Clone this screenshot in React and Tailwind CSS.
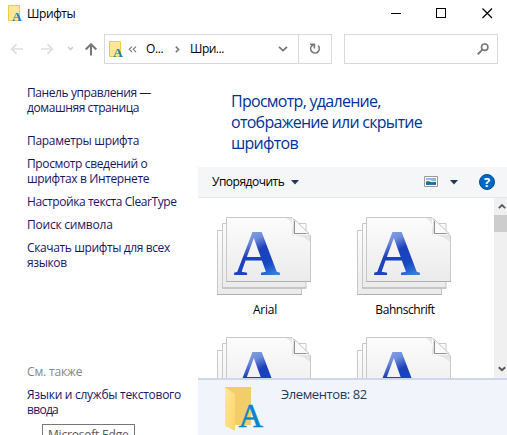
import React from "react";

const Chevron = ({ className, d, w = 1.8 }) => (
  <svg className={className} viewBox="0 0 10 6" fill="none" stroke="currentColor" strokeWidth={w}>
    <path d={d || "M1 .8 5 4.6 9 .8"} />
  </svg>
);

const FontFolder = () => (
  <svg className="h-[17px] w-[14px] shrink-0 overflow-visible" viewBox="0 0 14 17">
    <path d="M.5.5h11v15H.5z" fill="#ffe79a" stroke="#f5cb3c" />
    <text x="4" y="15.8" fontFamily="Liberation Serif" fontWeight="700" fontSize="13.5" fill="#1583b8">A</text>
  </svg>
);

const FontStack = () => (
  <svg className="h-[80px] w-[96px] shrink-0" viewBox="0 0 96 80">
    <defs>
      <linearGradient id="paper" x1="0" y1="0" x2="0" y2="1">
        <stop offset="0" stopColor="#fcfcfc" />
        <stop offset="1" stopColor="#ebebeb" />
      </linearGradient>
      <linearGradient id="ink" gradientUnits="userSpaceOnUse" x1="30" y1="14" x2="56" y2="64">
        <stop offset="0" stopColor="#8ba3e0" />
        <stop offset=".22" stopColor="#6f8edb" />
        <stop offset=".42" stopColor="#1c40bb" />
        <stop offset=".7" stopColor="#1746c2" />
        <stop offset="1" stopColor="#3f8fe0" />
      </linearGradient>
    </defs>
    <g stroke="#c8c8c8" fill="url(#paper)">
      <path d="M1.5 14.5H85.500V78.500H1.500z" />
      <path d="M6.500 7.500H90V72H6.500z" />
      <path d="M10.500 1.500H76L94.500 20V65.500H10.500z" />
    </g>
    <path d="M1 78.500H86M6 72H90.500M10 65.500H95" stroke="#a8a8a8" strokeWidth=".8" />
    <path d="M70 2H76V19H94V26Q88 20 77 19Q78 6 70 2z" fill="#d8d8d8" opacity=".6" />
    <path d="M78 3V17.500H93z" fill="#fafafa" stroke="#c4c4c4" />
    <path d="M78.500 5V17.500H90" stroke="#929292" fill="none" />
    <text x="17.500" y="58.700" fontFamily="Liberation Serif" fontWeight="700" fontSize="65" fill="url(#ink)">A</text>
  </svg>
);

const FontItem = ({ name, tracking }) => (
  <div className="flex h-[102px] w-[96px] flex-col items-center">
    <FontStack />
    <span className={`ml-0.5 mt-1.5 whitespace-nowrap text-[12px] leading-[16px] text-black ${tracking}`}>{name}</span>
  </div>
);

export default function App() {
  return (
    <div className="flex h-[435px] w-[507px] flex-col overflow-hidden bg-white font-['Open_Sans','Noto_Sans',sans-serif] text-[12px] text-black">
      <header className="flex h-[34px] shrink-0 items-start pl-2 pt-[5px]">
        <FontFolder />
        <span className="ml-[5px] leading-[17px] tracking-[-0.4px]">Шрифты</span>
        <svg className="ml-auto mr-3 h-[17px] w-[104px]" viewBox="0 0 104 17" fill="none" stroke="#000" shapeRendering="crispEdges">
          <path d="M0 8.500H10M45.500 3.500H54.500V12.500H45.500z" />
          <path d="M91.500 3.500 101 13M101 3.500 91.500 13" shapeRendering="auto" strokeWidth="1.2" />
        </svg>
      </header>

      <nav className="flex h-[30px] shrink-0 items-center">
        <svg className="ml-[10px] h-[14px] w-[88px]" viewBox="0 0 88 14" fill="none" strokeWidth="1.7">
          <g stroke="#dedede">
            <path d="M13 7H2M6.500 2.200 1.700 7l4.800 4.800M31 7H42M37.500 2.200 42.300 7l-4.800 4.800" />
            <path d="M58 5 60.500 7.500 63 5" stroke="#cfcfcf" />
          </g>
          <path d="M81 13.500V2.500M75.700 7.500 81 2.200l5.300 5.300" stroke="#777" strokeWidth="2" />
        </svg>
        <div className="ml-[6px] flex h-[30px] w-[228px] items-center border border-[#d9d9d9] pl-1">
          <FontFolder />
          <svg className="ml-[5px] h-[7px] w-[9px]" viewBox="0 0 9 7" fill="none" stroke="#777" strokeWidth="1.1">
            <path d="M4 .7 1.200 3.300 4 6M8 .7 5.200 3.300 8 6" />
          </svg>
          <span className="ml-[9px] w-[20px] whitespace-nowrap tracking-[-0.4px]">О...</span>
          <svg className="ml-[9px] h-[7px] w-[5px]" viewBox="0 0 5 7" fill="none" stroke="#777" strokeWidth="1.500">
            <path d="M.8.6 3.600 3.400.8 6.200" />
          </svg>
          <span className="ml-[10px] whitespace-nowrap tracking-[-0.5px]">Шри...</span>
          <Chevron className="ml-auto mr-[10px] h-[6px] w-[10px] text-[#777]" />
          <div className="flex h-full w-[33px] items-center justify-center border-l border-[#d9d9d9]">
            <svg className="h-[12px] w-[12px]" viewBox="0 0 12 12" fill="none" stroke="#777" strokeWidth="1.600">
              <path d="M9 2.600A4.300 4.300 0 1 1 2.800 2.800L5 1.200M1 1.300H5.400V5.600" />
            </svg>
          </div>
        </div>
        <div className="ml-3 flex h-[30px] w-[154px] items-center justify-end border border-[#d9d9d9] pr-2">
          <svg className="h-[12px] w-[12px]" viewBox="0 0 12 12" fill="none" stroke="#777" strokeWidth="1.600">
            <circle cx="7.700" cy="4.200" r="3.200" />
            <path d="M5.400 6.600.7 11.300" strokeWidth="1.900" />
          </svg>
        </div>
      </nav>

      <div className="flex min-h-0 flex-1">
        <aside className="flex w-[198px] shrink-0 flex-col whitespace-nowrap pl-[27px] pt-[21px] leading-[15px] text-[#1b1464]">
          <p className="tracking-[-0.41px]">Панель управления —<br />домашняя страница</p>
          <div className="mt-[18px] flex flex-col gap-2">
            <p className="tracking-[-0.3px]">Параметры шрифта</p>
            <p className="tracking-[-0.37px]">Просмотр сведений о<br />шрифтах в Интернете</p>
            <p className="tracking-[-0.42px]">Настройка текста ClearType</p>
            <p className="tracking-[-0.22px]">Поиск символа</p>
            <p className="tracking-[-0.38px]">Скачать шрифты для всех<br />языков</p>
          </div>
          <p className="mt-[94px] tracking-[-0.15px] text-[#858585]">См. также</p>
          <p className="mt-2 tracking-[-0.28px]">Языки и службы текстового<br /><span className="tracking-[-0.7px]">ввода</span></p>
          <div className="ml-[15px] mt-[7px] h-[22px] w-[93px] shrink-0 border border-[#767676] bg-white pl-[5px] pt-[2px] leading-[16px] tracking-[-0.2px] text-[#575757]">Microsoft Edge</div>
        </aside>

        <main className="flex min-w-0 flex-1 flex-col">
          <h1 className="h-[103px] shrink-0 whitespace-nowrap pl-[33px] pt-[27px] text-[16px] leading-[21px] tracking-[-0.72px] text-[#003399]">
            Просмотр, удаление,<br />отображение или скрытие<br />шрифтов
          </h1>
          <div className="flex h-[31px] shrink-0 items-center border-b border-[#e5e7e9] bg-[#f5f6f7] pl-[14px] pr-3">
            <span className="tracking-[-0.5px]">Упорядочить</span>
            <svg className="ml-[7px] h-[5px] w-[8px]" viewBox="0 0 8 5"><path d="M0 0H8L4 4.500z" fill="#1e395b" /></svg>
            <svg className="ml-auto h-[12px] w-[14px]" viewBox="0 0 14 12">
              <path d="M.5.5h13v10H.5z" fill="#fff" stroke="#999" />
              <path d="M2 2h10v7H2z" fill="#82b9e8" />
              <path d="M2 4q4-1 6 1l4 0v1H2z" fill="#e7f3f8" />
              <path d="M2 5.500q3-1 5 .8L12 6v3H2z" fill="#2e6873" />
              <path d="M2 7.700h10V9H2z" fill="#2674b5" />
            </svg>
            <svg className="ml-[12px] h-[5px] w-[8px]" viewBox="0 0 8 5"><path d="M0 0H8L4 4.500z" fill="#1e395b" /></svg>
            <span className="ml-[21px] flex h-4 w-4 items-center justify-center rounded-full border border-[#004b8d] bg-[#0067c5] text-[13px] font-bold leading-none text-white">?</span>
          </div>
          <div className="flex h-[180px] shrink-0 overflow-hidden">
            <div className="grid flex-1 grid-cols-[96px_96px] content-start gap-x-[44px] gap-y-[18px] overflow-hidden pl-[18px] pt-[18px]">
              <FontItem name="Arial" tracking="tracking-[-0.2px]" />
              <FontItem name="Bahnschrift" tracking="tracking-[-0.45px]" />
              <FontStack />
              <FontStack />
            </div>
            <div className="flex w-[13px] shrink-0 flex-col items-center bg-[#f0f0f0] pb-[6px] pt-[6px] text-[#555]">
              <Chevron className="ml-[2px] h-[5px] w-[8px] shrink-0" d="M1 5 5 1.200 9 5" w={2.2} />
              <div className="mt-[6px] h-[17px] w-full shrink-0 bg-[#cdcdcd]" />
              <Chevron className="ml-[2px] mt-auto h-[6px] w-[8px] shrink-0" w={2.4} />
            </div>
          </div>
          <footer className="flex flex-1 items-start border-t-2 border-[#ccd9ea] bg-[#f1f5fb] pl-[26px] text-[#1e395b]">
            <svg className="mt-[7px] h-[45px] w-[40px] shrink-0 overflow-visible" viewBox="0 0 40 45">
              <defs>
                <linearGradient id="flap" x1="0" y1="0" x2="1" y2="1">
                  <stop offset="0" stopColor="#ffe8a0" />
                  <stop offset="1" stopColor="#fbd466" />
                </linearGradient>
              </defs>
              <path d="M1 0H27V38H1z" fill="#f2cd69" />
              <path d="M1 0 11 7V43.500L1 39z" fill="url(#flap)" />
              <text x="14.500" y="39.500" fontFamily="Liberation Serif" fontSize="34" fill="#0a84cc" stroke="#0a84cc" strokeWidth=".5">A</text>
            </svg>
            <span className="ml-[17px] mt-[5px] text-[13px] leading-[18px] tracking-[-0.4px]">Элементов: 82</span>
          </footer>
        </main>
      </div>
    </div>
  );
}
